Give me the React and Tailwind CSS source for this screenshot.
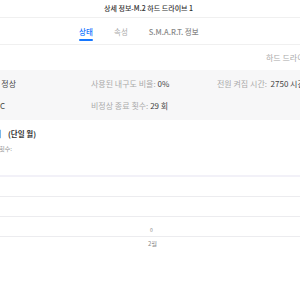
export default function App() {
  return (
    <div className="w-[300px] h-[300px] overflow-hidden bg-white whitespace-nowrap font-['Noto_Sans_CJK_KR','Noto_Sans',sans-serif] text-[#333]">
      {/* title bar */}
      <div className="h-[18px] border-b border-[#f0f0f0] flex items-center pl-[104px]">
        <span className="text-[7px] font-medium leading-none">상세 정보-M.2 하드 드라이브 1</span>
      </div>

      {/* tabs */}
      <div className="h-[27px] border-b border-[#f0f0f0] flex items-end pl-[79px] gap-[21px] text-[7.5px] leading-none">
        <div className="flex flex-col items-center">
          <span className="text-[#1677ff] font-medium pb-[4px]">상태</span>
          <div className="h-[2px] w-[14px] bg-[#1677ff] rounded-full mb-[3px]" />
        </div>
        <span className="text-[#aaa] pb-[9px]">속성</span>
        <span className="text-[#888] font-medium pb-[9px]">S.M.A.R.T. 정보</span>
      </div>

      {/* sub header */}
      <div className="h-[25px] flex items-center pl-[266px]">
        <span className="text-[8px] text-[#aaa] leading-none">하드 드라이브 1</span>
      </div>

      {/* status band */}
      <div className="bg-[#f7f7f8] py-[3px] text-[8px] leading-none">
        <div className="grid grid-cols-[91px_126px_1fr] h-[22px] items-center">
          <div className="w-[16px] flex justify-end">
            <span className="text-[#444]"><span className="text-[#999]">상태: </span>정상</span>
          </div>
          <span className="text-[#aaa]">사용된 내구도 비율: <span className="text-[#444]">0%</span></span>
          <span className="text-[#aaa]">전원 켜짐 시간:&nbsp; <span className="text-[#444]">2750 시간</span></span>
        </div>
        <div className="grid grid-cols-[91px_126px_1fr] h-[22px] items-center">
          <div className="w-[5px] flex justify-end">
            <span className="text-[#444]"><span className="text-[#999]">온도: </span>35 °C</span>
          </div>
          <span className="text-[#aaa]">비정상 종료 횟수: <span className="text-[#444]">29 회</span></span>
          <span />
        </div>
      </div>

      {/* usage section */}
      <div className="pt-[9px]">
        <div className="w-[36px] flex justify-end h-[9px] items-center">
          <span className="text-[7.5px] font-bold leading-none">월별 사용량 추이&nbsp;&nbsp;&nbsp;&nbsp;(단일 월)</span>
        </div>
        <div className="w-[12px] flex justify-end h-[9px] items-center mt-[6px]">
          <span className="text-[6px] text-[#888] leading-none">쓰기 횟수:</span>
        </div>

        {/* chart */}
        <div className="relative mt-[22px]">
          <div className="h-[21px] border-t-2 border-[#f2f1f8]" />
          <div className="h-[20px] border-t border-[#ececef]" />
          <div className="h-[20px] border-t border-[#ececef]" />
          <div className="border-t border-[#ececef]" />
          <span className="absolute left-[150px] top-[52px] text-[5px] text-[#888] leading-none">0</span>
          <div className="flex justify-center pl-[5px] pt-[4px]">
            <span className="text-[6px] text-[#888] leading-none">2월</span>
          </div>
        </div>
      </div>
    </div>
  );
}
